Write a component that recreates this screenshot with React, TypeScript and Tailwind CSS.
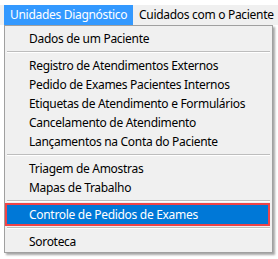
const itemsA = [
  'Registro de Atendimentos Externos',
  'Pedido de Exames Pacientes Internos',
  'Etiquetas de Atendimento e Formulários',
  'Cancelamento de Atendimento',
  'Lançamentos na Conta do Paciente',
];

const itemsB = ['Triagem de Amostras', 'Mapas de Trabalho'];

const Item = ({ label }: { label: string }) => (
  <div className="h-[19px] pl-[22px] flex items-center text-black whitespace-nowrap">{label}</div>
);

const Separator = () => (
  <div className="h-[8px] flex flex-col justify-center">
    <div className="border-t border-[#bdbdbd] border-b border-b-white" />
  </div>
);

export default function App() {
  return (
    <div
      className="relative w-[278px] h-[259px] overflow-hidden bg-white text-[12px] leading-none tracking-[-0.3px]"
      style={{ fontFamily: '"Noto Sans", "Open Sans", sans-serif' }}
    >
      <div className="h-[5px] bg-white" />
      {/* menu bar */}
      <div className="h-[20px] bg-[#f0f0f0] flex pl-[4px]">
        <div className="w-[129px] bg-[#3399ff] text-white pl-[6px] flex items-center whitespace-nowrap">Unidades Diagnóstico</div>
        <div className="text-black pl-[6px] flex items-center whitespace-nowrap">Cuidados com o Paciente</div>
      </div>

      {/* dropdown */}
      <div className="absolute left-[4px] top-[25px] w-[269px] border border-[#a0a0a0] bg-[#f0f0f0] pt-[3px] pb-[1px] px-[2px] shadow-[2px_2px_2px_rgba(0,0,0,0.35)]">
        <Item label="Dados de um Paciente" />
        <Separator />
        {itemsA.map((l) => (
          <Item key={l} label={l} />
        ))}
        <Separator />
        {itemsB.map((l) => (
          <Item key={l} label={l} />
        ))}
        <Separator />
        <div className="h-[19px] mr-[2px] bg-[#0078d7] outline-2 outline-[#ef4448] text-white pl-[22px] flex items-center whitespace-nowrap">
          Controle de Pedidos de Exames
        </div>
        <Separator />
        <Item label="Soroteca" />
      </div>
    </div>
  );
}
